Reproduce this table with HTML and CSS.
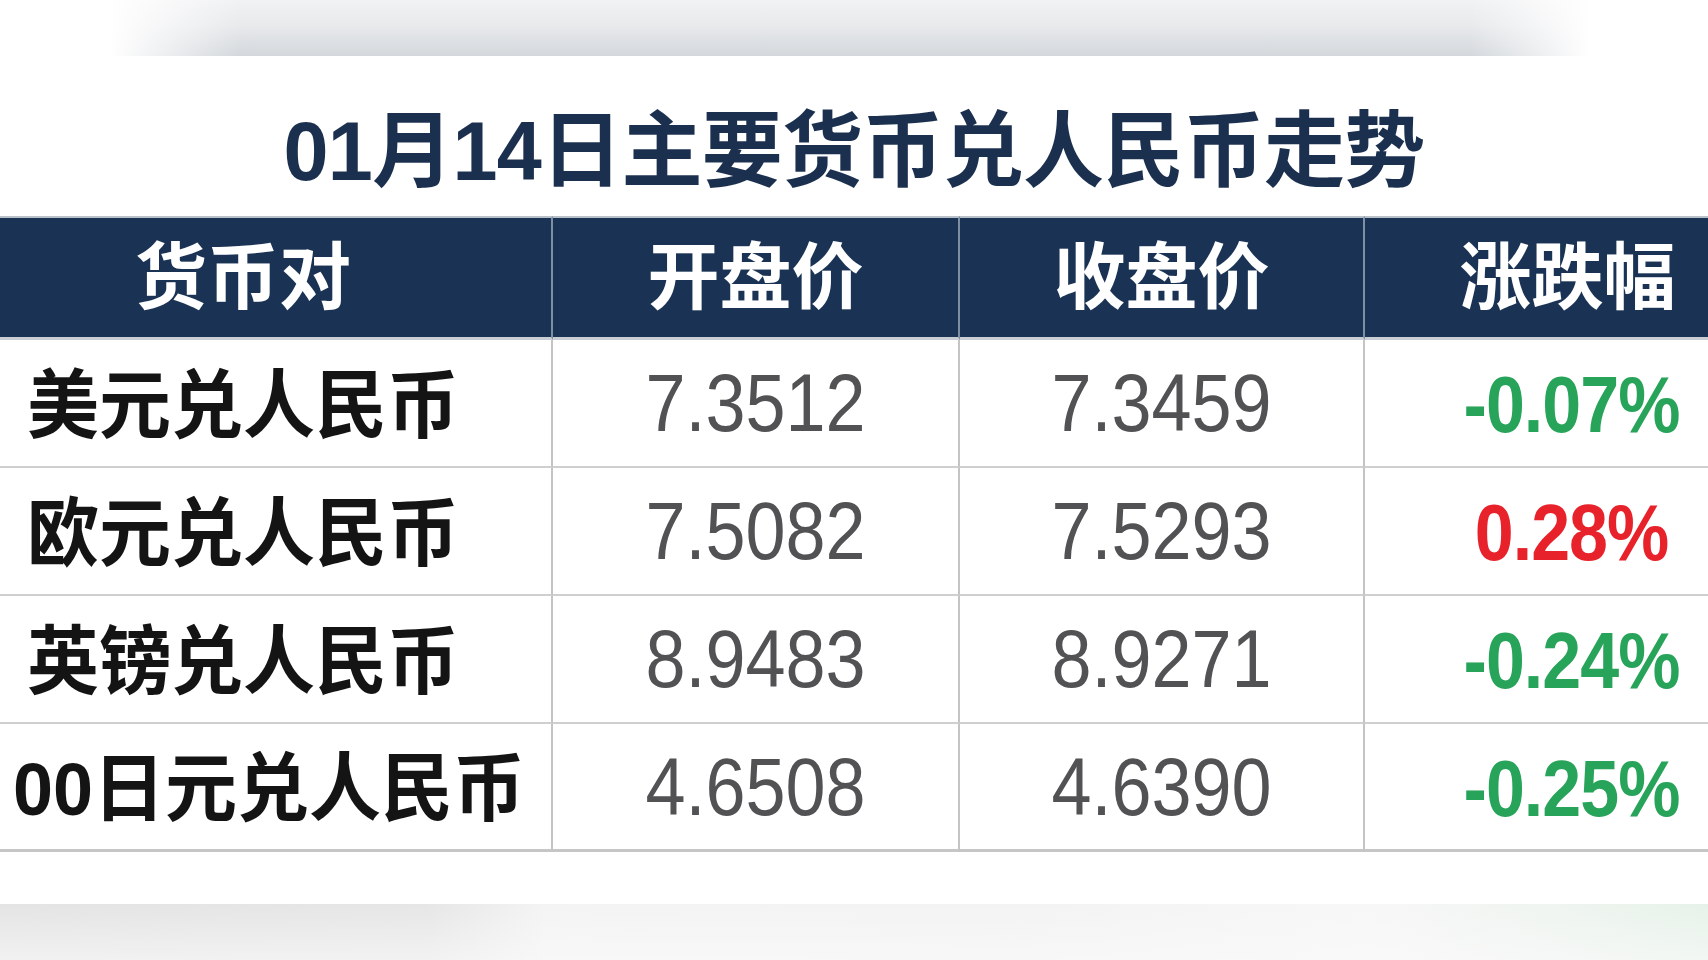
FILE: index.html
```html
<!DOCTYPE html>
<html lang="zh-CN">
<head>
<meta charset="utf-8">
<title>01月14日主要货币兑人民币走势</title>
<link rel="stylesheet" href="styles.css">
</head>
<body>
<div class="page">
  <div class="band band-top"></div>
  <div class="card">
    <h1 class="title"><span class="t">01月14日主要货币兑人民币走势</span></h1>
    <div class="table">
      <div class="cell head"><span class="cj">货币对</span></div>
      <div class="cell head"><span class="cj">开盘价</span></div>
      <div class="cell head"><span class="cj">收盘价</span></div>
      <div class="cell head last"><span class="cj">涨跌幅</span></div>

      <div class="cell name"><span class="cj">美元兑人民币</span></div>
      <div class="cell num"><span class="n">7.3512</span></div>
      <div class="cell num"><span class="n">7.3459</span></div>
      <div class="cell pct down last"><span class="n">-0.07%</span></div>

      <div class="cell name"><span class="cj">欧元兑人民币</span></div>
      <div class="cell num"><span class="n">7.5082</span></div>
      <div class="cell num"><span class="n">7.5293</span></div>
      <div class="cell pct up last"><span class="n">0.28%</span></div>

      <div class="cell name"><span class="cj">英镑兑人民币</span></div>
      <div class="cell num"><span class="n">8.9483</span></div>
      <div class="cell num"><span class="n">8.9271</span></div>
      <div class="cell pct down last"><span class="n">-0.24%</span></div>

      <div class="cell name wide bottom"><span class="cj">00日元兑人民币</span></div>
      <div class="cell num bottom"><span class="n">4.6508</span></div>
      <div class="cell num bottom"><span class="n">4.6390</span></div>
      <div class="cell pct down last bottom"><span class="n">-0.25%</span></div>
    </div>
  </div>
  <div class="band band-bottom"></div>
</div>
</body>
</html>
```
FILE: styles.css
```css
html, body {
  margin: 0;
  padding: 0;
  background: #ffffff;
}
body {
  width: 1708px;
  height: 960px;
  overflow: hidden;
  font-family: "Noto Sans CJK SC", "Noto Sans", sans-serif;
}
.page {
  width: 1708px;
  height: 960px;
  display: flex;
  flex-direction: column;
  overflow: hidden;
}
.band-top {
  height: 56px;
  flex: none;
  background:
    linear-gradient(to right, #ffffff 0px, #ffffff 110px, rgba(255,255,255,0) 240px, rgba(255,255,255,0) 1470px, #ffffff 1590px, #ffffff 1708px),
    linear-gradient(to bottom, #f1f2f3 0%, #e8eaec 45%, #d4d8dc 100%);
}
.card {
  flex: 1;
  display: flex;
  flex-direction: column;
  background: #ffffff;
}
.title {
  margin: 0;
  height: 160px;
  box-sizing: border-box;
  padding-top: 14px;
  display: flex;
  align-items: center;
  justify-content: center;
  font-family: "Liberation Sans", "Noto Sans CJK SC", sans-serif;
  font-size: 81px;
  font-weight: 700;
  color: #1b2f4e;
  letter-spacing: -0.7px;
}
.t {
  display: inline-block;
  transform: scaleY(1.03);
}
.table {
  display: grid;
  grid-template-columns: 618px 407px 405px 405px;
  grid-template-rows: 124px 128px 128px 128px 128px;
  margin-left: -65px;
  width: 1835px;
}
.cell {
  display: flex;
  align-items: center;
  justify-content: center;
  box-sizing: border-box;
  border-right: 2px solid #c4c4c4;
  border-bottom: 2px solid #cfcfcf;
  background: #ffffff;
  white-space: nowrap;
}
.cell.last {
  border-right: none;
}
.head {
  background: #1a3354;
  color: #ffffff;
  font-weight: 700;
  font-size: 72px;
  border-top: 2px solid #b9c0c8;
  border-right: 2px solid #7f8fa3;
  border-bottom: 3px solid #c9ced4;
}
.head.last {
  border-right: none;
}
.cj {
  display: inline-block;
  transform: translateY(-6px) scaleY(1.01);
}
.name {
  font-family: "Liberation Sans", "Noto Sans CJK SC", sans-serif;
  font-size: 72px;
  font-weight: 700;
  color: #141414;
}
.name .cj {
  transform: translateY(-4px) scaleY(1.04);
}
.name.wide {
  justify-content: flex-end;
  padding-right: 26px;
}
.num {
  font-family: "Liberation Sans", Arial, sans-serif;
  font-size: 72px;
  font-weight: 400;
  color: #525254;
}
.n {
  display: inline-block;
  transform: scaleY(1.12);
}
.pct {
  font-family: "Liberation Sans", Arial, sans-serif;
  font-size: 70px;
  font-weight: 700;
  letter-spacing: -1px;
  padding-left: 8px;
}
.pct .n {
  transform: translateY(2px) scaleY(1.13);
}
.down {
  color: #28a45a;
}
.up {
  color: #e8222a;
}
.bottom {
  border-bottom: 3px solid #c6c6c6;
}
.band-bottom {
  height: 56px;
  flex: none;
  margin-top: auto;
  background:
    linear-gradient(to bottom, rgba(255,255,255,0) 0%, rgba(250,250,250,0.6) 100%),
    linear-gradient(to right, #e4e4e4 0%, #e6e6e6 25%, #f4f4f4 32%, #f3f3f3 60%, #f7f7f7 80%, #eef4ef 92%, #e6f2e9 100%);
}
```
